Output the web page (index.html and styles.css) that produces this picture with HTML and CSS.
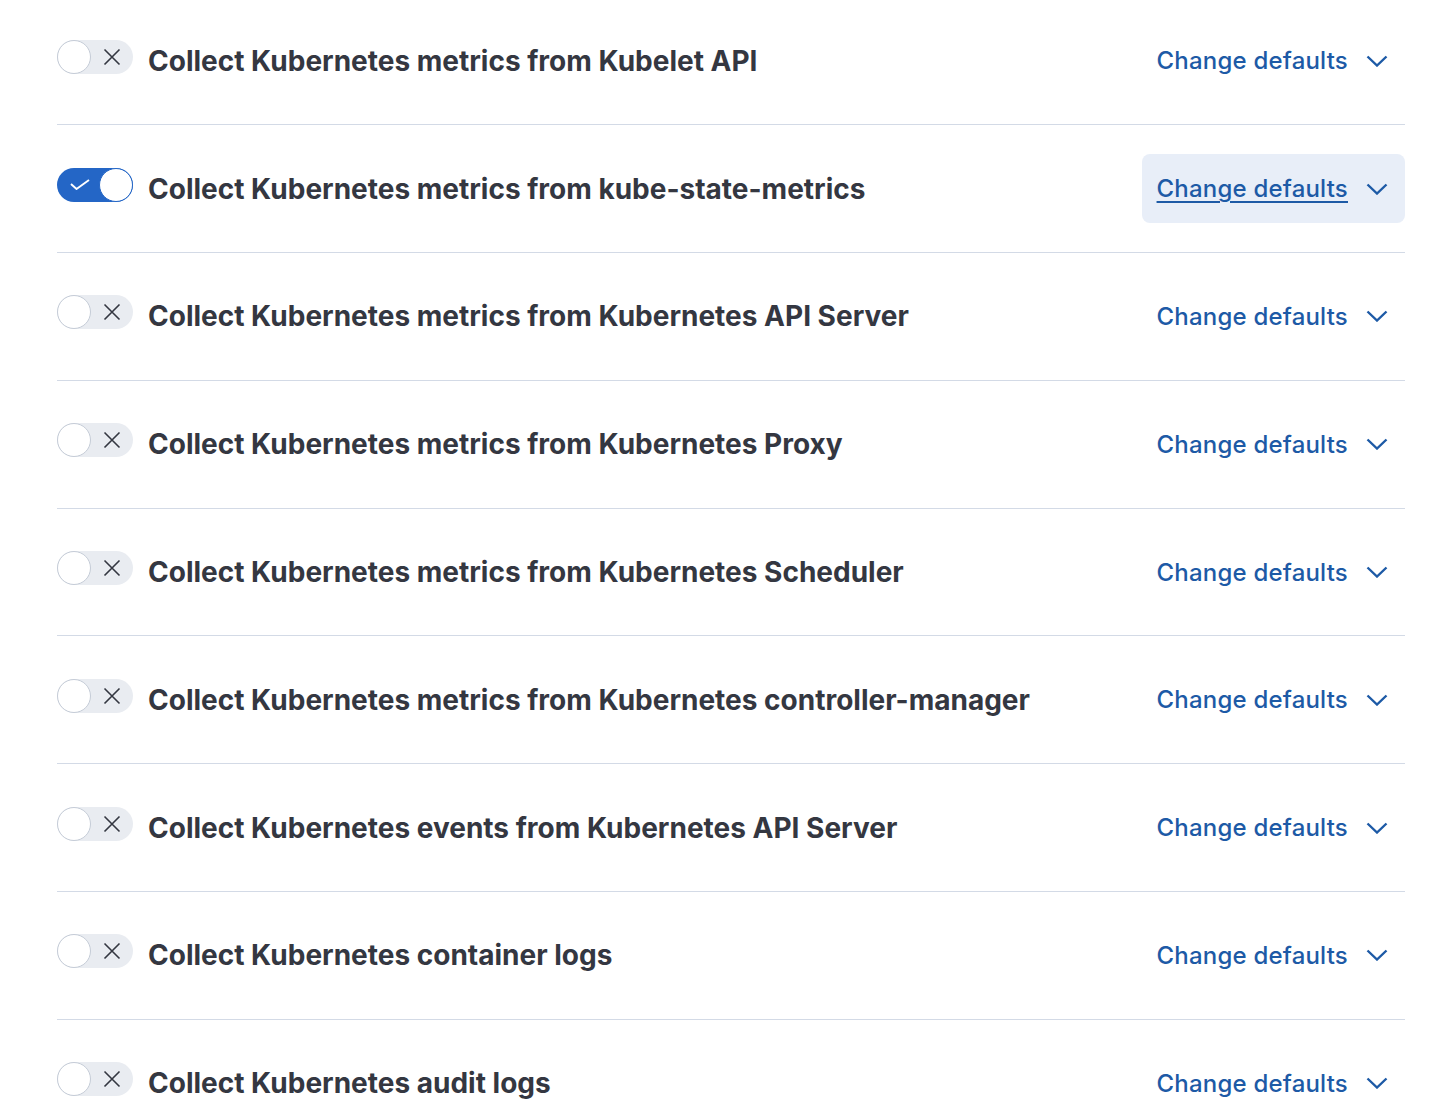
FILE: index.html
```html
<!DOCTYPE html>
<html>
<head>
<meta charset="utf-8">
<link rel="stylesheet" href="styles.css">
</head>
<body>
<div class="list">
  <div class="row">
    <div class="left">
      <span class="switch off"><span class="knob"></span><svg class="ico x" viewBox="0 0 18 18"><path d="M1.5 1.5L16.5 16.5M16.5 1.5L1.5 16.5"/></svg></span>
      <span class="title">Collect Kubernetes metrics from Kubelet API</span>
    </div>
    <button class="cd"><span class="lbl">Change defaults</span><svg class="chev" viewBox="0 0 22 12"><path d="M1.5 1.5L11 10.5L20.5 1.5"/></svg></button>
  </div>
  <div class="row">
    <div class="left">
      <span class="switch on"><svg class="ico chk" viewBox="0 0 20 11"><path d="M1 5L6.5 10L19 1"/></svg><span class="knob"></span></span>
      <span class="title">Collect Kubernetes metrics from kube-state-metrics</span>
    </div>
    <button class="cd active"><span class="lbl">Change defaults</span><svg class="chev" viewBox="0 0 22 12"><path d="M1.5 1.5L11 10.5L20.5 1.5"/></svg></button>
  </div>
  <div class="row">
    <div class="left">
      <span class="switch off"><span class="knob"></span><svg class="ico x" viewBox="0 0 18 18"><path d="M1.5 1.5L16.5 16.5M16.5 1.5L1.5 16.5"/></svg></span>
      <span class="title">Collect Kubernetes metrics from Kubernetes API Server</span>
    </div>
    <button class="cd"><span class="lbl">Change defaults</span><svg class="chev" viewBox="0 0 22 12"><path d="M1.5 1.5L11 10.5L20.5 1.5"/></svg></button>
  </div>
  <div class="row">
    <div class="left">
      <span class="switch off"><span class="knob"></span><svg class="ico x" viewBox="0 0 18 18"><path d="M1.5 1.5L16.5 16.5M16.5 1.5L1.5 16.5"/></svg></span>
      <span class="title">Collect Kubernetes metrics from Kubernetes Proxy</span>
    </div>
    <button class="cd"><span class="lbl">Change defaults</span><svg class="chev" viewBox="0 0 22 12"><path d="M1.5 1.5L11 10.5L20.5 1.5"/></svg></button>
  </div>
  <div class="row">
    <div class="left">
      <span class="switch off"><span class="knob"></span><svg class="ico x" viewBox="0 0 18 18"><path d="M1.5 1.5L16.5 16.5M16.5 1.5L1.5 16.5"/></svg></span>
      <span class="title">Collect Kubernetes metrics from Kubernetes Scheduler</span>
    </div>
    <button class="cd"><span class="lbl">Change defaults</span><svg class="chev" viewBox="0 0 22 12"><path d="M1.5 1.5L11 10.5L20.5 1.5"/></svg></button>
  </div>
  <div class="row">
    <div class="left">
      <span class="switch off"><span class="knob"></span><svg class="ico x" viewBox="0 0 18 18"><path d="M1.5 1.5L16.5 16.5M16.5 1.5L1.5 16.5"/></svg></span>
      <span class="title">Collect Kubernetes metrics from Kubernetes controller-manager</span>
    </div>
    <button class="cd"><span class="lbl">Change defaults</span><svg class="chev" viewBox="0 0 22 12"><path d="M1.5 1.5L11 10.5L20.5 1.5"/></svg></button>
  </div>
  <div class="row">
    <div class="left">
      <span class="switch off"><span class="knob"></span><svg class="ico x" viewBox="0 0 18 18"><path d="M1.5 1.5L16.5 16.5M16.5 1.5L1.5 16.5"/></svg></span>
      <span class="title">Collect Kubernetes events from Kubernetes API Server</span>
    </div>
    <button class="cd"><span class="lbl">Change defaults</span><svg class="chev" viewBox="0 0 22 12"><path d="M1.5 1.5L11 10.5L20.5 1.5"/></svg></button>
  </div>
  <div class="row">
    <div class="left">
      <span class="switch off"><span class="knob"></span><svg class="ico x" viewBox="0 0 18 18"><path d="M1.5 1.5L16.5 16.5M16.5 1.5L1.5 16.5"/></svg></span>
      <span class="title">Collect Kubernetes container logs</span>
    </div>
    <button class="cd"><span class="lbl">Change defaults</span><svg class="chev" viewBox="0 0 22 12"><path d="M1.5 1.5L11 10.5L20.5 1.5"/></svg></button>
  </div>
  <div class="row">
    <div class="left">
      <span class="switch off"><span class="knob"></span><svg class="ico x" viewBox="0 0 18 18"><path d="M1.5 1.5L16.5 16.5M16.5 1.5L1.5 16.5"/></svg></span>
      <span class="title">Collect Kubernetes audit logs</span>
    </div>
    <button class="cd"><span class="lbl">Change defaults</span><svg class="chev" viewBox="0 0 22 12"><path d="M1.5 1.5L11 10.5L20.5 1.5"/></svg></button>
  </div>
</div>
</body>
</html>
```
FILE: styles.css
```css
html, body {
  margin: 0;
  padding: 0;
  background: #ffffff;
  overflow: hidden;
}
body {
  font-family: Inter, "Noto Sans", sans-serif;
}
.list {
  margin: -2.5px 25px 0 57px;
}
.row {
  display: flex;
  align-items: center;
  justify-content: space-between;
  padding: 28.9px 0;
  border-bottom: 1px solid #d3dae6;
}
.left {
  display: flex;
  align-items: flex-start;
  gap: 15px;
}
.title {
  font-size: 28px;
  font-weight: 700;
  line-height: 42px;
  color: #343741;
}
.switch {
  flex: none;
  width: 76px;
  height: 34px;
  border-radius: 17px;
  display: flex;
  align-items: center;
  box-sizing: border-box;
}
.switch.off {
  background: #e9ecf1;
}
.switch.on {
  background: #2466c6;
}
.knob {
  width: 34px;
  height: 34px;
  border-radius: 50%;
  box-sizing: border-box;
  background: #ffffff;
  flex: none;
}
.switch.off .knob {
  border: 1px solid #c5ccd7;
}
.switch.on .knob {
  border: 1.5px solid #2466c6;
  margin-left: auto;
}
.ico {
  fill: none;
  stroke-linecap: butt;
}
.ico.x {
  width: 18px;
  height: 18px;
  stroke: #343741;
  stroke-width: 1.6;
  margin-left: 12px;
}
.ico.chk {
  width: 20px;
  height: 11px;
  stroke: #ffffff;
  stroke-width: 1.9;
  margin-left: 13px;
}
.cd {
  display: flex;
  align-items: center;
  gap: 18px;
  height: 69px;
  padding: 0 17px 0 15px;
  border: none;
  border-radius: 8px;
  background: transparent;
  font-family: Inter, "Noto Sans", sans-serif;
  font-size: 24px;
  font-weight: 500;
  letter-spacing: 0.2px;
  color: #1d5aa6;
  cursor: pointer;
}
.cd.active {
  background: #e8eef8;
}
.cd.active .lbl {
  text-decoration: underline;
  text-decoration-thickness: 2px;
  text-underline-offset: 4px;
}
.chev {
  width: 22px;
  height: 12px;
  fill: none;
  stroke: #1d5aa6;
  stroke-width: 2.4;
}
```
